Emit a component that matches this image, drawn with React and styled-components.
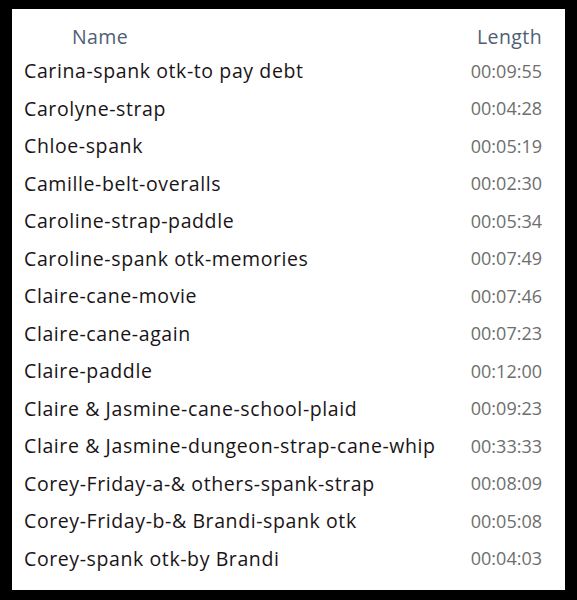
import React from "react";
import styled, { createGlobalStyle } from "styled-components";

const files = [
  ["Carina-spank otk-to pay debt", "00:09:55"],
  ["Carolyne-strap", "00:04:28"],
  ["Chloe-spank", "00:05:19"],
  ["Camille-belt-overalls", "00:02:30"],
  ["Caroline-strap-paddle", "00:05:34"],
  ["Caroline-spank otk-memories", "00:07:49"],
  ["Claire-cane-movie", "00:07:46"],
  ["Claire-cane-again", "00:07:23"],
  ["Claire-paddle", "00:12:00"],
  ["Claire & Jasmine-cane-school-plaid", "00:09:23"],
  ["Claire & Jasmine-dungeon-strap-cane-whip", "00:33:33"],
  ["Corey-Friday-a-& others-spank-strap", "00:08:09"],
  ["Corey-Friday-b-& Brandi-spank otk", "00:05:08"],
  ["Corey-spank otk-by Brandi", "00:04:03"],
];

const Global = createGlobalStyle`
  html, body {
    margin: 0;
    background: #000;
  }
  body {
    font-family: "Open Sans", "Noto Sans", sans-serif;
  }
`;

const Screen = styled.div`
  width: 577px;
  height: 600px;
  background: #000;
  padding: 9px 12px 10px 12px;
  box-sizing: border-box;
`;

const Panel = styled.div`
  background: #fff;
  height: 100%;
  display: flex;
  flex-direction: column;
  padding-top: 12px;
  box-sizing: border-box;
`;

const Row = styled.div`
  display: grid;
  grid-template-columns: 1fr 100px;
  align-items: center;
  height: ${(p) => (p.$head ? "31px" : "37.5px")};
  padding: 0 23px 0 12px;
`;

const HeadCell = styled.div`
  font-size: 19.5px;
  letter-spacing: 0.4px;
  color: #505e74;
  padding-left: ${(p) => p.$indent || 0}px;
  text-align: ${(p) => (p.$right ? "right" : "left")};
`;

const NameCell = styled.div`
  font-size: 19.5px;
  letter-spacing: 0.6px;
  color: #1a1416;
  white-space: nowrap;
`;

const TimeCell = styled.div`
  font-size: 18px;
  color: #6e6e6e;
  text-align: right;
`;

export default function App() {
  return (
    <>
      <Global />
      <Screen>
        <Panel>
          <Row $head>
            <HeadCell $indent={48}>Name</HeadCell>
            <HeadCell $right>Length</HeadCell>
          </Row>
          {files.map(([name, len]) => (
            <Row key={name}>
              <NameCell>{name}</NameCell>
              <TimeCell>{len}</TimeCell>
            </Row>
          ))}
        </Panel>
      </Screen>
    </>
  );
}
